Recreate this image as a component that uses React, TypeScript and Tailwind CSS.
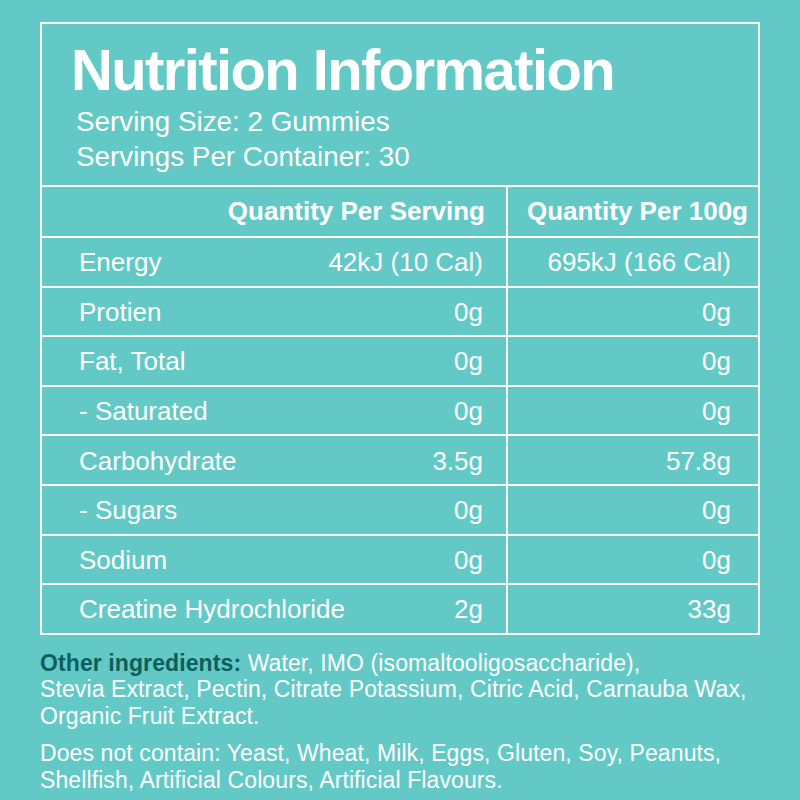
import React from 'react';

interface Row {
  name: string;
  perServing: string;
  per100g: string;
}

const rows: Row[] = [
  { name: 'Energy', perServing: '42kJ (10 Cal)', per100g: '695kJ (166 Cal)' },
  { name: 'Protien', perServing: '0g', per100g: '0g' },
  { name: 'Fat, Total', perServing: '0g', per100g: '0g' },
  { name: '- Saturated', perServing: '0g', per100g: '0g' },
  { name: 'Carbohydrate', perServing: '3.5g', per100g: '57.8g' },
  { name: '- Sugars', perServing: '0g', per100g: '0g' },
  { name: 'Sodium', perServing: '0g', per100g: '0g' },
  { name: 'Creatine Hydrochloride', perServing: '2g', per100g: '33g' },
];

const App: React.FC = () => {
  return (
    <div
      className="w-[800px] h-[800px] bg-[#63c9c7] text-white pt-[22px] pl-[40px] overflow-hidden"
      style={{ fontFamily: '"Liberation Sans", Arial, sans-serif' }}
    >
      <div className="w-[720px] border-2 border-white">
        {/* heading */}
        <div className="h-[161px] pt-[17px]">
          <h1 className="pl-[29px] text-[58px] leading-[58px] font-bold tracking-[-1.6px]">
            Nutrition Information
          </h1>
          <div className="mt-[5px] pl-[34px] text-[27.8px] leading-[35px]">
            <p>Serving Size: 2 Gummies</p>
            <p>Servings Per Container: 30</p>
          </div>
        </div>

        {/* column headings */}
        <div className="grid grid-cols-[464px_1fr] border-t-2 border-white h-[51px] text-[26px] font-bold">
          <div className="flex items-center justify-end pr-[21px]">Quantity Per Serving</div>
          <div className="flex items-center justify-end pr-[10px] border-l-2 border-white">
            Quantity Per 100g
          </div>
        </div>

        {/* nutrient rows */}
        {rows.map((row) => (
          <div
            key={row.name}
            className="grid grid-cols-[464px_1fr] border-t-2 border-white h-[49.6px] text-[26px]"
          >
            <div className="flex items-center justify-between pl-[37px] pr-[23px] pt-[2px]">
              <span>{row.name}</span>
              <span>{row.perServing}</span>
            </div>
            <div className="flex items-center justify-end pr-[27px] pt-[2px] border-l-2 border-white">
              {row.per100g}
            </div>
          </div>
        ))}
      </div>

      {/* ingredients */}
      <div className="mt-[15px] text-[23px] leading-[26.5px] tracking-[0.1px] whitespace-nowrap">
        <p>
          <span className="font-bold text-[#0c5f5a]">Other ingredients:</span> Water, IMO (isomaltooligosaccharide),
          <br />
          Stevia Extract, Pectin, Citrate Potassium, Citric Acid, Carnauba Wax,
          <br />
          Organic Fruit Extract.
        </p>
        <p className="mt-[11px]">
          Does not contain: Yeast, Wheat, Milk, Eggs, Gluten, Soy, Peanuts,
          <br />
          Shellfish, Artificial Colours, Artificial Flavours.
        </p>
      </div>
    </div>
  );
};

export default App;
